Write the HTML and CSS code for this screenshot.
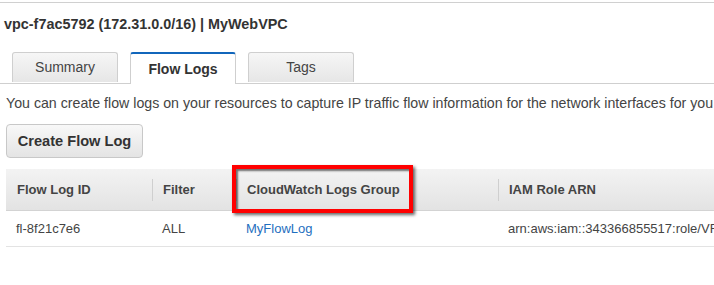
FILE: index.html
```html
<!DOCTYPE html>
<html lang="en">
<head>
  <meta charset="UTF-8">
  <title>VPC Flow Logs</title>
  <link rel="stylesheet" href="styles.css">
</head>
<body>
  <div class="panel">
    <h1>vpc-f7ac5792 (172.31.0.0/16) | MyWebVPC</h1>

    <div class="tabs">
      <div class="tab">Summary</div>
      <div class="tab active">Flow Logs</div>
      <div class="tab">Tags</div>
    </div>

    <p class="intro">You can create flow logs on your resources to capture IP traffic flow information for the network interfaces for you</p>

    <button class="btn">Create Flow Log</button>

    <table class="grid">
      <colgroup>
        <col class="c-id">
        <col class="c-filter">
        <col class="c-group">
        <col class="c-role">
      </colgroup>
      <thead>
        <tr>
          <th>Flow Log ID</th>
          <th><span class="sep"></span>Filter</th>
          <th class="marked"><span class="sep"></span>CloudWatch Logs Group<span class="callout"></span></th>
          <th><span class="sep"></span>IAM Role ARN</th>
        </tr>
      </thead>
      <tbody>
        <tr>
          <td>fl-8f21c7e6</td>
          <td>ALL</td>
          <td><a href="#">MyFlowLog</a></td>
          <td>arn:aws:iam::343366855517:role/VF</td>
        </tr>
      </tbody>
    </table>
  </div>
</body>
</html>
```

FILE: styles.css
```css
body {
  margin: 0;
  font-family: "Liberation Sans", Arial, sans-serif;
  font-size: 13px;
  color: #444;
  background: #fff;
  overflow: hidden;
}
.panel {
  margin-top: 2px;
  border-top: 1px solid #d0d0d0;
}
h1 {
  font-size: 14.4px;
  font-weight: bold;
  color: #333;
  margin: 13px 0 0 4px;
  line-height: 17px;
}
.tabs {
  display: flex;
  gap: 12px;
  margin-top: 19px;
  padding-left: 12px;
  border-bottom: 1px solid #cfcfcf;
}
.tab {
  width: 104px;
  height: 29px;
  line-height: 29px;
  text-align: center;
  font-size: 14px;
  color: #444;
  border: 1px solid #cfcfcf;
  border-bottom: none;
  border-radius: 3px 3px 0 0;
  background: linear-gradient(#f6f6f6, #e6e6e6);
  margin-bottom: -1px;
}
.tab.active {
  background: #fff;
  font-weight: bold;
  color: #333;
  border-top: 2px solid #1166bb;
  height: 29px;
  line-height: 30px;
  padding-bottom: 1px;
}
.intro {
  margin: 11px 0 0 6px;
  line-height: 17px;
  white-space: nowrap;
  font-size: 14.2px;
}
.btn {
  display: block;
  margin: 12px 0 0 6px;
  width: 137px;
  height: 34px;
  font-family: inherit;
  font-size: 14.6px;
  font-weight: bold;
  color: #333;
  border: 1px solid #c8c8c8;
  border-radius: 4px;
  background: linear-gradient(#f8f8f8, #e4e4e4);
  padding: 0;
}
.grid {
  margin: 11px 0 0 6px;
  width: 900px;
  border-collapse: collapse;
  table-layout: fixed;
}
.c-id { width: 146px; }
.c-filter { width: 84px; }
.c-group { width: 262px; }
.c-role { width: 408px; }
.grid th {
  position: relative;
  height: 41px;
  padding: 0 0 0 11px;
  text-align: left;
  font-size: 13px;
  font-weight: bold;
  color: #444;
  background: linear-gradient(#f3f3f3, #e3e3e3);
  border-bottom: 1px solid #d3d3d3;
}
.sep {
  position: absolute;
  left: 0;
  top: 10px;
  height: 22px;
  border-left: 1px solid #cfcfcf;
}
.grid td {
  height: 35px;
  padding: 0 0 0 10px;
  font-size: 13px;
  color: #444;
  border-bottom: 1px solid #e3e3e3;
  white-space: nowrap;
  overflow: hidden;
}
.grid a {
  color: #1f6fc0;
  text-decoration: none;
}
.callout {
  position: absolute;
  left: -4px;
  top: -4px;
  width: 173px;
  height: 40px;
  border: 4px solid #f00;
  box-shadow: 2px 2px 3px rgba(0, 0, 0, 0.6), inset 2px 2px 2px rgba(0, 0, 0, 0.55);
}
```
